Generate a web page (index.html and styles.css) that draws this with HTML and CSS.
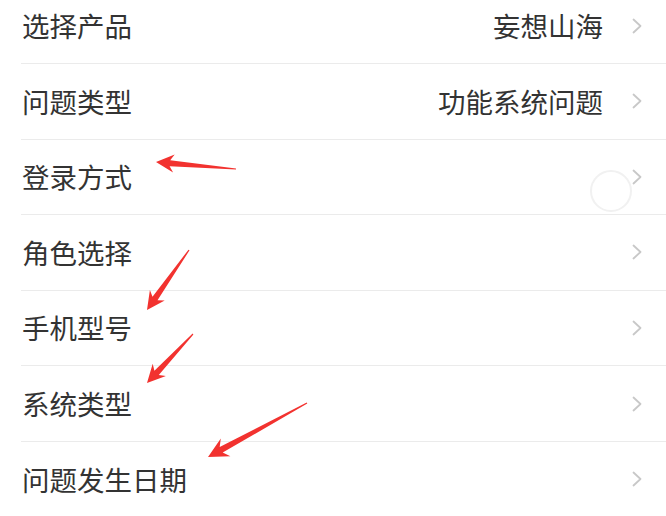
FILE: index.html
```html
<!DOCTYPE html>
<html lang="zh-CN">
<head>
<meta charset="utf-8">
<link rel="stylesheet" href="styles.css">
</head>
<body>
<div class="page">
  <ul class="list">
    <li class="row"><span class="label">选择产品</span><span class="value">妄想山海</span><svg class="chev" viewBox="0 0 10 16"><polyline points="1.5,1.5 8.5,8 1.5,14.5"/></svg></li>
    <li class="row"><span class="label">问题类型</span><span class="value">功能系统问题</span><svg class="chev" viewBox="0 0 10 16"><polyline points="1.5,1.5 8.5,8 1.5,14.5"/></svg></li>
    <li class="row"><span class="label">登录方式</span><span class="value"></span><svg class="chev" viewBox="0 0 10 16"><polyline points="1.5,1.5 8.5,8 1.5,14.5"/></svg></li>
    <li class="row"><span class="label">角色选择</span><span class="value"></span><svg class="chev" viewBox="0 0 10 16"><polyline points="1.5,1.5 8.5,8 1.5,14.5"/></svg></li>
    <li class="row"><span class="label">手机型号</span><span class="value"></span><svg class="chev" viewBox="0 0 10 16"><polyline points="1.5,1.5 8.5,8 1.5,14.5"/></svg></li>
    <li class="row"><span class="label">系统类型</span><span class="value"></span><svg class="chev" viewBox="0 0 10 16"><polyline points="1.5,1.5 8.5,8 1.5,14.5"/></svg></li>
    <li class="row"><span class="label">问题发生日期</span><span class="value"></span><svg class="chev" viewBox="0 0 10 16"><polyline points="1.5,1.5 8.5,8 1.5,14.5"/></svg></li>
  </ul>
  <div class="ring"></div>
  <svg class="marks" viewBox="0 0 666 516" width="666" height="516">
    <polygon points="156,162 174.7,154.6 170.2,160.2 236,168.5 236,169.5 169.6,166.2 173.1,172.6"/>
    <polygon points="147,310 164.7,300.4 157.5,300.2 189.5,250.3 188.5,249.7 152.5,296.8 149.9,290.0"/>
    <polygon points="147,383 165.9,376.1 158.8,374.9 193.4,334.4 192.6,333.6 154.4,370.7 152.7,363.7"/>
    <polygon points="208,457 230.4,456.2 222.7,452.6 307.3,403.5 306.7,402.5 219.7,447.0 220.8,438.6"/>
  </svg>
</div>
</body>
</html>
```

FILE: styles.css
```css
html, body {
  margin: 0;
  padding: 0;
  background: #ffffff;
}
.page {
  position: relative;
  width: 666px;
  height: 516px;
  overflow: hidden;
  font-family: "Noto Sans CJK SC", "Noto Sans", sans-serif;
}
.list {
  list-style: none;
  margin: -11.6px 0 0 21px;
  padding: 0;
}
.row {
  display: flex;
  align-items: center;
  height: 74.6px;
  border-bottom: 1px solid #ebebeb;
  padding: 0 24px 0 1px;
}
.label {
  flex: 1;
  font-size: 27.5px;
  color: #333333;
  line-height: 1;
}
.value {
  font-size: 27.5px;
  color: #333333;
  line-height: 1;
  margin-right: 29px;
}
.chev {
  width: 10px;
  height: 16px;
  flex: none;
}
.chev polyline {
  fill: none;
  stroke: #c8c8c8;
  stroke-width: 1.8;
  stroke-linecap: round;
  stroke-linejoin: round;
}
.ring {
  position: absolute;
  left: 590px;
  top: 170px;
  width: 38px;
  height: 38px;
  border: 2px solid #f1f1f1;
  border-radius: 50%;
}
.marks {
  position: absolute;
  left: 0;
  top: 0;
  pointer-events: none;
}
.marks polygon {
  fill: #f2322f;
}
```
